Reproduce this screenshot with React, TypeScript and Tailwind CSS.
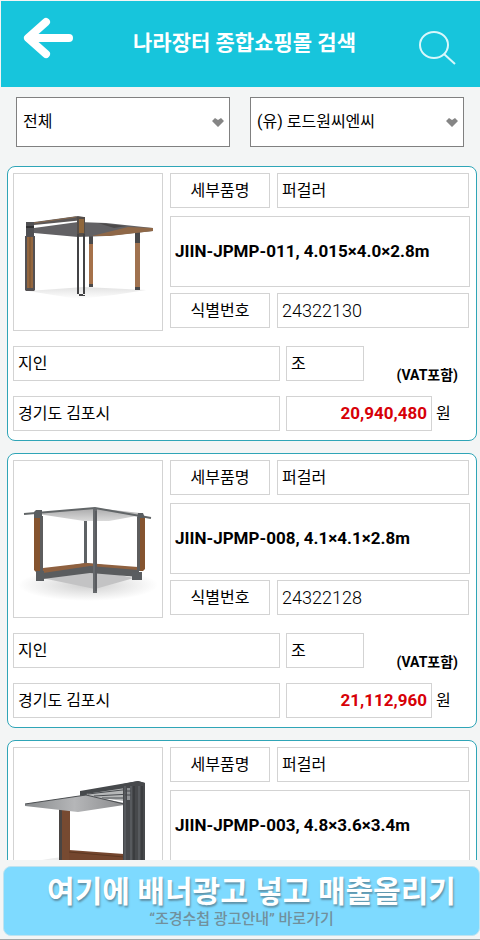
import { useState } from "react";
import type { ReactNode } from "react";
import clsx from "clsx";

type Product = {
  id: string;
  category: string;
  model: string;
  maker: string;
  unit: string;
  region: string;
  price: string;
  drawing: ReactNode;
};

const FlatPergola = () => (
  <svg viewBox="0 0 148 156" className="w-full" role="img" aria-label="퍼걸러">
    <defs>
      <linearGradient id="floor" x1="0" y1="0" x2="0" y2="1">
        <stop offset="0" stopColor="#e2e2e2" />
        <stop offset="1" stopColor="#ffffff" />
      </linearGradient>
    </defs>
    <path d="M14 117 L70 113 L132 116 L100 121 L64 125 Z" fill="url(#floor)" />
    <path d="M75 60 h4 v51 h-4 z" fill="#a5714a" />
    <path d="M75 60 h4 v10 h-4 z M75 110 h4 v3 h-4 z" fill="#4a4a4c" />
    <path d="M121 58 h5 v57 h-5 z" fill="#a0724f" />
    <path d="M121 56 h5 v13 h-5 z M121 113 h5 v3 h-5 z" fill="#48484a" />
    <path d="M20 54 L64 48 L92 49 L139 54 V57 L92 62 L64 63 L20 59 Z" fill="#626164" />
    <path d="M114 53 L139 54 V57 L96 62 L78 62 Z" fill="#8f6848" />
    <path d="M84 49 L112 52 L100 54 Z" fill="#4c4a4a" />
    <path d="M13 49 L64 42 L70 43 V46 L20 51 H13 Z" fill="#5b5757" />
    <path d="M20 49 L62 43" stroke="#86694f" strokeWidth="1" />
    <path d="M12 48 h8 v15 h-8 z" fill="#505053" />
    <path d="M12 52 h8 v2 h-8 z" fill="#303032" />
    <path d="M11 62 h10 v54 l-1 1 h-8 l-1 -1 z" fill="#535052" />
    <path d="M13 63 h6 v51 h-6 z" fill="#93663f" />
    <path d="M16 63 v51" stroke="#76502f" strokeWidth="1" />
    <path d="M63 43 h8 v19 h-8 z" fill="#544d48" />
    <path d="M65 45 h5 v14 h-5 z" fill="#8f673c" />
    <path d="M63 60 v62 h2 v-62 z M69 60 v61 h2 v-61 z M63 120 h8 v2 h-8 z" fill="#434345" />
  </svg>
);

const CornerPergola = () => (
  <svg viewBox="0 0 148 156" className="w-full" role="img" aria-label="퍼걸러">
    <defs>
      <linearGradient id="canopy" x1="0" y1="0" x2="0" y2="1">
        <stop offset="0" stopColor="#a9a9aa" />
        <stop offset="1" stopColor="#dadada" />
      </linearGradient>
      <radialGradient id="shade">
        <stop offset="0" stopColor="#cfcfcf" />
        <stop offset="1" stopColor="#ffffff" />
      </radialGradient>
    </defs>
    <ellipse cx="74" cy="124" rx="70" ry="16" fill="url(#shade)" />
    <path d="M28 117 L72 107 L120 117 L81 128 Z" fill="#c3c3c4" />
    <path d="M24 53 L34 51 L81 47 L126 52 L128 54 L95 60 L70 60 Z" fill="url(#canopy)" />
    <path d="M70 60 h3 v44 h-3 z" fill="#5e6265" />
    <path d="M29 109 L72 102 L125 108 V116 L76 112 L29 118 Z" fill="#5a5c5e" />
    <path d="M29 107 L72 102 L124 106 V109 L76 105 L29 112 Z" fill="#8f6140" />
    <path d="M20 55 h6 v56 h-4 l-2 -2 z" fill="#85542f" />
    <path d="M26 55 h3 v56 h-3 z" fill="#5d5d5e" />
    <path d="M22 110 h8 v10 h-8 z" fill="#5a5d60" />
    <path d="M131 56 v52 l-2 2 h-4 v-54 z" fill="#85542f" />
    <path d="M123 56 h3 v54 h-3 z" fill="#5d5d5e" />
    <path d="M118 111 h10 v8 h-10 z" fill="#5a5d60" />
    <path d="M10 53 L34 51 L81 47 L115 53 L137 57" fill="none" stroke="#626668" strokeWidth="2" />
    <path d="M22 49 h6 v8 h-8 v-6 z M124 52 h5 l2 5 h-8 z" fill="#595d60" />
    <path d="M79 47 h4 v85 h-4 z" fill="#66696c" />
    <path d="M82 50 v80" stroke="#4c4f52" strokeWidth="1" />
  </svg>
);

const WallPergola = () => (
  <svg viewBox="0 0 148 156" className="w-full" role="img" aria-label="퍼걸러">
    <defs>
      <linearGradient id="roof" x1="0" y1="0" x2="1" y2="0">
        <stop offset="0" stopColor="#888b8d" />
        <stop offset="0.5" stopColor="#b5b6b8" />
        <stop offset="1" stopColor="#8a8b8d" />
      </linearGradient>
    </defs>
    <path d="M11 116 Q40 108 70 108 V122 H11 Z" fill="#ededed" />
    <path d="M45 60 h11 v60 h-11 z" fill="#774a31" />
    <path d="M45 60 h3 v60 h-3 z" fill="#4a4543" />
    <path d="M55 102 L110 106 V121 H55 Z" fill="#74462e" />
    <path d="M55 104 L110 109" stroke="#5e3822" strokeWidth="1" />
    <path d="M66 43 L124 33 L131 35 V39 L66 49 Z" fill="#46494c" />
    <path d="M72 46 L118 39 V54 L78 49 Z" fill="#b5b7b8" />
    <path d="M74 46 L117 41 M80 48 L117 46 M88 50 L117 50" stroke="#494c50" strokeWidth="1" />
    <path d="M11 56 L72 47 L110 55 V57 L64 64 L55 63 L11 58 Z" fill="url(#roof)" />
    <path d="M11 56 L72 47 L110 56" stroke="#4b4e51" strokeWidth="1" fill="none" />
    <path d="M109 36 L124 33 L131 35 V157 H109 Z" fill="#47494c" />
    <path d="M111 38 v119 M117 38 v119 M125 38 v119" stroke="#696c70" strokeWidth="1" />
    <path d="M120 38 v119 M128 38 v119" stroke="#303235" strokeWidth="1" />
    <path d="M113 40 h3 v12 h-3 z" fill="#8e9194" />
    <path d="M111 43 h6 M111 47 h6" stroke="#47494c" strokeWidth="1" />
  </svg>
);

const products: Product[] = [
  {
    id: "24322130",
    category: "퍼걸러",
    model: "JIIN-JPMP-011, 4.015×4.0×2.8m",
    maker: "지인",
    unit: "조",
    region: "경기도 김포시",
    price: "20,940,480",
    drawing: <FlatPergola />,
  },
  {
    id: "24322128",
    category: "퍼걸러",
    model: "JIIN-JPMP-008, 4.1×4.1×2.8m",
    maker: "지인",
    unit: "조",
    region: "경기도 김포시",
    price: "21,112,960",
    drawing: <CornerPergola />,
  },
  {
    id: "24322123",
    category: "퍼걸러",
    model: "JIIN-JPMP-003, 4.8×3.6×3.4m",
    maker: "지인",
    unit: "조",
    region: "경기도 김포시",
    price: "19,800,000",
    drawing: <WallPergola />,
  },
];

const Box = ({ children, className }: { children: ReactNode; className?: string }) => (
  <div className={clsx("flex items-center border border-[#d3d3d3] px-1", className)}>
    {children}
  </div>
);

const Dropdown = ({ label, options }: { label: string; options: string[] }) => {
  const [value, setValue] = useState(options[0]);

  return (
    <div className="relative flex-1">
      <select
        aria-label={label}
        value={value}
        onChange={(e) => setValue(e.target.value)}
        className="h-[50px] w-full appearance-none border border-[#808080] bg-white pr-6 pl-1.5 text-base text-black"
      >
        {options.map((option) => (
          <option key={option}>{option}</option>
        ))}
      </select>
      <svg
        viewBox="0 0 12 9"
        className="pointer-events-none absolute top-[21px] right-1.5 h-[9px] w-3"
        fill="#858585"
      >
        <path d="M0 3 L3 0 L6 2 L9 0 L12 3 L6 9 Z" />
      </svg>
    </div>
  );
};

const ProductCard = ({ product }: { product: Product }) => (
  <li className="rounded-lg border border-[#2fa5b7] bg-white pt-1.5 pr-1.5 pb-[9px] pl-[5px]">
    <div className="flex gap-[7px]">
      <div className="flex h-[158px] w-[150px] shrink-0 items-center border border-[#d3d3d3]">
        {product.drawing}
      </div>
      <div className="flex flex-1 flex-col">
        <div className="flex gap-[7px] pr-px">
          <Box className="h-[35px] w-[100px] justify-center">세부품명</Box>
          <Box className="h-[35px] flex-1">{product.category}</Box>
        </div>
        <Box className="mt-2 mb-1.5 h-[71px]">
          <h2 className="text-[17px] font-bold">{product.model}</h2>
        </Box>
        <div className="flex gap-[7px] pr-px">
          <Box className="h-[35px] w-[100px] justify-center">식별번호</Box>
          <Box className="h-[35px] flex-1 text-lg font-light">{product.id}</Box>
        </div>
      </div>
    </div>
    <div className="mt-[15px] grid grid-cols-[267fr_184fr] gap-x-1.5 gap-y-[15px]">
      <Box className="h-[35px]">{product.maker}</Box>
      <div className="flex items-end justify-between">
        <Box className="h-[35px] w-[78px]">{product.unit}</Box>
        <span className="mr-3 -mb-1 text-sm font-bold">(VAT포함)</span>
      </div>
      <Box className="h-[35px]">{product.region}</Box>
      <div className="flex items-center gap-1">
        <Box className="h-[35px] w-[146px] justify-end text-[17px] font-bold text-[#d70007]">
          {product.price}
        </Box>
        <span>원</span>
      </div>
    </div>
  </li>
);

export default function App() {
  return (
    <div className="flex h-screen flex-col border-b border-[#a3a6a7] bg-[#f3f5f5] pt-px font-['Roboto','Noto_Sans_CJK_KR',sans-serif] text-base text-black">
      <header className="ml-px flex h-[86px] shrink-0 items-center justify-between bg-[#17c5dc] pr-6 pl-5">
        <button aria-label="뒤로" className="-mt-3">
          <svg width="54" height="44" viewBox="0 0 54 44" fill="none" stroke="#fff" strokeLinecap="round" strokeLinejoin="round">
            <path d="M8 22 H48" strokeWidth="8" />
            <path d="M25 6 L7 22 L25 38" strokeWidth="8" />
          </svg>
        </button>
        <h1 className="mr-1 text-[21px] font-bold text-white">나라장터 종합쇼핑몰 검색</h1>
        <button aria-label="검색" className="mt-2">
          <svg width="38" height="36" viewBox="0 0 38 36" fill="none" stroke="#d8f7fb" strokeWidth="2">
            <ellipse cx="16" cy="15" rx="14" ry="13" />
            <path d="M26 24 L37 34" />
          </svg>
        </button>
      </header>

      <div className="flex shrink-0 gap-5 px-4 pt-2.5">
        <Dropdown label="분류" options={["전체"]} />
        <Dropdown label="업체" options={["(유) 로드원씨엔씨"]} />
      </div>

      <ul className="mt-[19px] flex min-h-0 flex-1 flex-col gap-3 overflow-y-auto pr-[3px] pl-[7px] [scrollbar-width:none]">
        {products.map((product) => (
          <ProductCard key={product.id} product={product} />
        ))}
      </ul>

      <a
        href="#ad"
        className="mt-1.5 mb-[3px] ml-[3px] flex h-[70px] shrink-0 flex-col items-center justify-end rounded-lg border border-[#bfe3f0] bg-[#7edaff] pb-1.5"
      >
        <strong className="pl-5 text-3xl leading-[34px] font-bold whitespace-nowrap text-white [text-shadow:1px_2px_2px_#5f92a8]">
          여기에 배너광고 넣고 매출올리기
        </strong>
        <span className="text-[15px] leading-5 font-medium text-[#71909c]">
          “조경수첩 광고안내” 바로가기
        </span>
      </a>
    </div>
  );
}
